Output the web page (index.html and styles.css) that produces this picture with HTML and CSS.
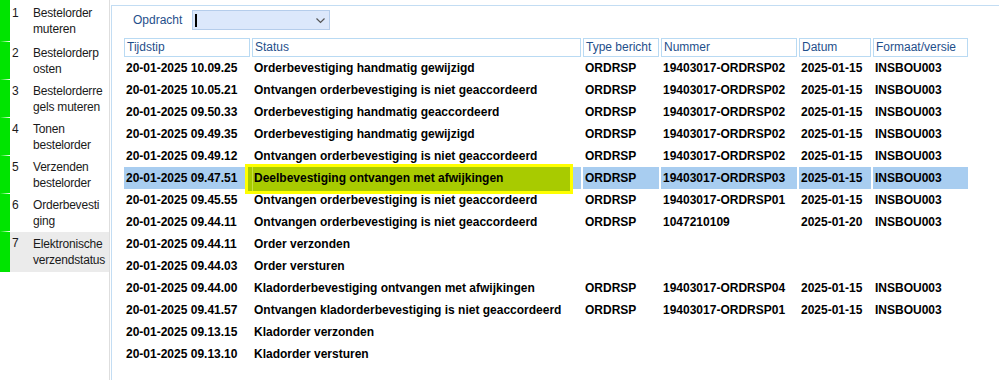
FILE: index.html
```html
<!DOCTYPE html>
<html lang="nl">
<head>
    <meta charset="UTF-8">
    <title>Elektronische verzendstatus</title>
    <link rel="stylesheet" href="styles.css">
</head>
<body>
<div class="app">
    <nav class="menu">
        <div class="menu-item first"><span class="nr">1</span><span class="label">Bestelorder<br>muteren</span></div>
        <div class="menu-item"><span class="nr">2</span><span class="label">Bestelorderp<br>osten</span></div>
        <div class="menu-item"><span class="nr">3</span><span class="label">Bestelorderre<br>gels muteren</span></div>
        <div class="menu-item"><span class="nr">4</span><span class="label">Tonen<br>bestelorder</span></div>
        <div class="menu-item"><span class="nr">5</span><span class="label">Verzenden<br>bestelorder</span></div>
        <div class="menu-item"><span class="nr">6</span><span class="label">Orderbevesti<br>ging</span></div>
        <div class="menu-item active"><span class="nr">7</span><span class="label">Elektronische<br>verzendstatus</span></div>
    </nav>

    <main class="panel">
        <div class="filter">
            <label class="filter-label">Opdracht</label>
            <div class="combo">
                <span class="caret"></span>
                <svg class="chevron" width="9" height="6" viewBox="0 0 9 6"><path d="M0.5 0.5 L4.5 4.5 L8.5 0.5" fill="none" stroke="#555" stroke-width="1.2"/></svg>
            </div>
        </div>

        <table class="status-table">
            <colgroup>
                <col style="width:126px">
                <col style="width:329px">
                <col style="width:76px">
                <col style="width:136px">
                <col style="width:72px">
                <col style="width:95px">
            </colgroup>
            <thead>
                <tr>
                    <th>Tijdstip</th>
                    <th>Status</th>
                    <th>Type bericht</th>
                    <th>Nummer</th>
                    <th>Datum</th>
                    <th>Formaat/versie</th>
                </tr>
            </thead>
            <tbody>
                <tr><td>20-01-2025 10.09.25</td><td>Orderbevestiging handmatig gewijzigd</td><td>ORDRSP</td><td>19403017-ORDRSP02</td><td>2025-01-15</td><td>INSBOU003</td></tr>
                <tr><td>20-01-2025 10.05.21</td><td>Ontvangen orderbevestiging is niet geaccordeerd</td><td>ORDRSP</td><td>19403017-ORDRSP02</td><td>2025-01-15</td><td>INSBOU003</td></tr>
                <tr><td>20-01-2025 09.50.33</td><td>Orderbevestiging handmatig geaccordeerd</td><td>ORDRSP</td><td>19403017-ORDRSP02</td><td>2025-01-15</td><td>INSBOU003</td></tr>
                <tr><td>20-01-2025 09.49.35</td><td>Orderbevestiging handmatig gewijzigd</td><td>ORDRSP</td><td>19403017-ORDRSP02</td><td>2025-01-15</td><td>INSBOU003</td></tr>
                <tr><td>20-01-2025 09.49.12</td><td>Ontvangen orderbevestiging is niet geaccordeerd</td><td>ORDRSP</td><td>19403017-ORDRSP02</td><td>2025-01-15</td><td>INSBOU003</td></tr>
                <tr class="selected"><td>20-01-2025 09.47.51</td><td class="marked"><span class="mark"></span><span class="mark-text">Deelbevestiging ontvangen met afwijkingen</span></td><td>ORDRSP</td><td>19403017-ORDRSP03</td><td>2025-01-15</td><td>INSBOU003</td></tr>
                <tr><td>20-01-2025 09.45.55</td><td>Ontvangen orderbevestiging is niet geaccordeerd</td><td>ORDRSP</td><td>19403017-ORDRSP01</td><td>2025-01-15</td><td>INSBOU003</td></tr>
                <tr><td>20-01-2025 09.44.11</td><td>Ontvangen orderbevestiging is niet geaccordeerd</td><td>ORDRSP</td><td>1047210109</td><td>2025-01-20</td><td>INSBOU003</td></tr>
                <tr><td>20-01-2025 09.44.11</td><td>Order verzonden</td><td></td><td></td><td></td><td></td></tr>
                <tr><td>20-01-2025 09.44.03</td><td>Order versturen</td><td></td><td></td><td></td><td></td></tr>
                <tr><td>20-01-2025 09.44.00</td><td>Kladorderbevestiging ontvangen met afwijkingen</td><td>ORDRSP</td><td>19403017-ORDRSP04</td><td>2025-01-15</td><td>INSBOU003</td></tr>
                <tr><td>20-01-2025 09.41.57</td><td>Ontvangen kladorderbevestiging is niet geaccordeerd</td><td>ORDRSP</td><td>19403017-ORDRSP01</td><td>2025-01-15</td><td>INSBOU003</td></tr>
                <tr><td>20-01-2025 09.13.15</td><td>Kladorder verzonden</td><td></td><td></td><td></td><td></td></tr>
                <tr><td>20-01-2025 09.13.10</td><td>Kladorder versturen</td><td></td><td></td><td></td><td></td></tr>
            </tbody>
        </table>
    </main>
</div>
</body>
</html>
```

FILE: styles.css
```css
body {
    margin: 0;
    font-family: 'Liberation Sans', Tahoma, sans-serif;
    font-size: 12px;
    color: #000;
    background: #fff;
}

.app {
    display: flex;
    height: 380px;
    overflow: hidden;
}

/* left menu */
.menu {
    width: 109px;
    border-right: 1px solid #dedede;
    flex-shrink: 0;
}

.menu-item {
    display: flex;
    align-items: center;
    height: 37px;
    border-left: 10px solid #00e400;
    border-top: 1px solid #fff;
    color: #1a1a1a;
    line-height: 16px;
}

.menu-item.first {
    height: 41px;
    border-top: none;
}

.menu-item.active {
    background: #ebebeb;
    height: 40px;
}

.menu-item .nr {
    width: 21px;
    padding-left: 2px;
    flex-shrink: 0;
    align-self: flex-start;
    margin-top: 3px;
}

.menu-item.first .nr {
    margin-top: 5px;
}

.menu-item .label {
    white-space: nowrap;
    letter-spacing: -0.2px;
}

/* content panel */
.panel {
    flex: 1;
    margin-top: 5px;
    margin-left: 1px;
    border-top: 1px solid #c3ddf3;
    border-left: 1px solid #c3ddf3;
}

.filter {
    display: flex;
    align-items: center;
    gap: 10px;
    padding: 4px 0 0 21px;
}

.filter-label {
    color: #1f4f8b;
}

.combo {
    position: relative;
    width: 136px;
    height: 18px;
    background: #dce8fb;
    border: 1px solid #b5cdeb;
}

.caret {
    position: absolute;
    left: 2px;
    top: 3px;
    width: 2px;
    height: 13px;
    background: #000;
}

.chevron {
    position: absolute;
    right: 4px;
    top: 7px;
}

/* table */
.status-table {
    margin: 8px 0 0 10px;
    border-collapse: separate;
    border-spacing: 2px 0;
    table-layout: fixed;
    width: 848px;
}

.status-table th {
    padding: 1px 2px;
    line-height: 15px;
    border: 1px solid #b9daf3;
    color: #1f4f8b;
    font-weight: normal;
    text-align: left;
    white-space: nowrap;
}

.status-table td {
    height: 22px;
    padding: 0 2px;
    font-weight: bold;
    white-space: nowrap;
    overflow: visible;
}

.status-table tr.selected td {
    background: #a8cdf0;
}

.status-table td.marked {
    position: relative;
}

.mark {
    position: absolute;
    left: -7px;
    top: -3px;
    width: 322px;
    height: 24px;
    border: 3px solid #ffff00;
    background: #a8cb00;
}

.mark::before {
    content: "";
    position: absolute;
    left: 4px;
    top: 0;
    bottom: 0;
    width: 1px;
    background: #c8e040;
}

.mark-text {
    position: relative;
}
```
